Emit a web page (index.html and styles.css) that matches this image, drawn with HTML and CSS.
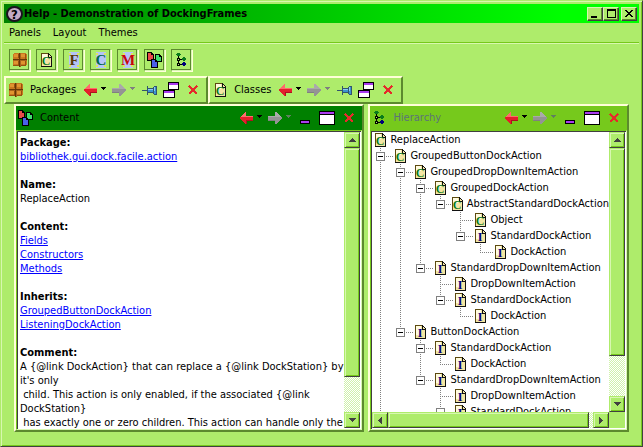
FILE: index.html
```html
<!DOCTYPE html>
<html lang="en">
<head>
<meta charset="utf-8">
<title>Help - Demonstration of DockingFrames</title>
<link rel="stylesheet" href="styles.css">
</head>
<body>
<svg class="sprite" aria-hidden="true">
  <symbol id="package" viewBox="0 0 14 14">
    <path fill="#c87820" d="M1 0h12v1h1v11h-1v1H1v-1H0V1h1z"/>
    <path fill="#e09430" d="M1 1h4v3H1zM8 1h4v3H8zM1 8h4v3H1zM8 8h4v3H8z"/>
    <path fill="#96500f" d="M0 12h6v1H0zM8 12h5v1H8zM5 1h1v4H5zM12 1h1v5h-1zM12 8h1v5h-1zM5 8h1v5H5z"/>
    <path fill="#663506" d="M6 0h1v14H6zM0 6h14v1H0z"/>
    <path fill="#a8641c" d="M7 0h1v6H7zM7 7h1v7H7zM0 7h6v1H0zM8 7h6v1H8z"/>
  </symbol>
  <symbol id="sheet" viewBox="0 0 11 14">
    <path fill="#f3e6a4" d="M0 0h7l4 4v10H0z"/>
    <path fill="#fffbe0" d="M1 1h5v5H1zM1 6h3v4H1z"/>
    <path fill="#5c4a10" d="M0 0h1v14H0zM0 0h7v1H0z"/>
    <path fill="#111" d="M0 13h11v1H0zM10 4h1v10h-1zM7 0h1v5H7zM7 4h4v1H7zM8 1h1v1H8zM9 2h1v1H9zM10 3h1v1h-1z"/>
  </symbol>
  <symbol id="class" viewBox="0 0 11 14">
    <use href="#sheet" width="11" height="14"/>
    <text x="5" y="12" text-anchor="middle" class="glyph glyph-class">C</text>
  </symbol>
  <symbol id="interface" viewBox="0 0 11 14">
    <use href="#sheet" width="11" height="14"/>
    <text x="5" y="12" text-anchor="middle" class="glyph glyph-interface">I</text>
  </symbol>
  <symbol id="member" viewBox="0 0 16 16">
    <path fill="#b4c4f8" d="M3 0h10v16H3z"/>
    <path fill="#dfe45c" d="M3 1h2v2H3zM11 1h2v2h-2zM3 13h2v2H3zM11 13h2v2h-2z"/>
  </symbol>
  <symbol id="pages" viewBox="0 0 15 16">
    <path stroke="#000" fill="#e84a4a" d="M.5.5h4l2 2v6h-6z"/>
    <path stroke="#000" fill="#3fe070" d="M8.500 2.500h4l2 2v5h-6z"/>
    <path stroke="#000" fill="#4a60e8" d="M4.500 7.500h4l2 2v6h-6z"/>
    <path stroke="#000" fill="none" d="M4.500.5v2h2M12.500 2.500v2h2M8.500 7.500v2h2"/>
  </symbol>
  <symbol id="hierarchy" viewBox="0 0 11 14">
    <path stroke="#000" fill="none" d="M2.500 3v10M3 6.500h4M3 11.500h4"/>
    <path fill="#0a7a1c" d="M1 0h3v1H1zM0 1h5v1H0zM1 2h3v1H1zM7 4h2v1H7zM6 5h4v2H6zM7 7h2v1H7z"/>
    <path fill="#00007a" d="M7 9h2v1H7zM6 10h4v2H6zM7 12h2v1H7z"/>
    <path fill="#000" d="M1 5h3v3H1zM1 10h3v3H1z"/>
    <path fill="#aeec6b" d="M2 6h1v1H2zM2 11h1v1H2z"/>
  </symbol>
  <symbol id="arrow-left" viewBox="0 0 14 12">
    <path fill="#e3202c" d="M0 6l6-6h1v4h7v5H7v3H6z"/>
    <path fill="#ff6b6b" d="M1 5l5-5h1v4h7v1H6L4 5z"/>
    <path fill="#ad1220" d="M1 7l5 5h1V8h7v1H8v3H6z"/>
  </symbol>
  <symbol id="arrow-right" viewBox="0 0 14 12">
    <path fill="#949494" d="M14 6L8 0H7v4H0v5h7v3h1z"/>
    <path fill="#aaa" d="M13 5L8 0H7v4H0v1h8z"/>
    <path fill="#808080" d="M13 7l-5 5H7V8H0v1h7v3h1z"/>
  </symbol>
  <symbol id="caret" viewBox="0 0 5 3"><path fill="currentColor" d="M0 0h5v1H4v1H3v1H2V2H1V1H0z"/></symbol>
  <symbol id="pin" viewBox="0 0 15 9">
    <path fill="#33556e" d="M0 4h5v1H0zM5 0h1v9H5zM6 2h5v5H6zM11 1h1v7h-1zM12 0h3v9h-3z"/>
    <path fill="#3c94cf" d="M6 3h5v3H6zM12 1h2v7h-2z"/>
    <path fill="#8accf4" d="M6 3h5v1H6zM12 1h1v4h-1z"/>
  </symbol>
  <symbol id="windows" viewBox="0 0 16 16">
    <path fill="#000" d="M5 0h11v8H5zM0 8h12v8H0z"/>
    <path fill="#fff" d="M6 3h9v4H6zM1 11h10v4H1z"/>
    <path fill="#aa3cf0" d="M6 1h9v2H6zM1 9h10v2H1z"/>
  </symbol>
  <symbol id="minimize" viewBox="0 0 10 14"><path fill="#000" d="M0 9h10v4H0z"/><path fill="#aa3cf0" d="M1 10h8v2H1z"/></symbol>
  <symbol id="maximize" viewBox="0 0 16 14"><path fill="#000" d="M0 0h16v14H0z"/><path fill="#fff" d="M1 4h14v9H1z"/><path fill="#aa3cf0" d="M1 1h14v2H1z"/></symbol>
  <symbol id="cross" viewBox="0 0 10 10"><path fill="none" stroke="#e52b2b" stroke-width="2" d="M1 1l8 8M9 1L1 9"/></symbol>
  <symbol id="up" viewBox="0 0 7 4"><path fill="currentColor" d="M3 0h1v1h1v1h1v1h1v1H0V3h1V2h1V1h1z"/></symbol>
  <symbol id="down" viewBox="0 0 7 4"><path fill="currentColor" d="M0 0h7v1H6v1H5v1H4v1H3V3H2V2H1V1H0z"/></symbol>
  <symbol id="left" viewBox="0 0 4 7"><path fill="currentColor" d="M4 0v7H3V6H2V5H1V4H0V3h1V2h1V1h1V0z"/></symbol>
  <symbol id="right" viewBox="0 0 4 7"><path fill="currentColor" d="M0 0v7h1V6h1V5h1V4h1V3H3V2H2V1H1V0z"/></symbol>
</svg>

<div class="window">
  <header class="titlebar">
    <svg class="app-icon" width="17" height="16" viewBox="0 0 17 16" aria-hidden="true">
      <ellipse cx="8.500" cy="8" rx="7.500" ry="7" fill="#c4abc6" stroke="#1c1220" stroke-width="2"/>
      <text x="8.500" y="13" text-anchor="middle" class="app-glyph">?</text>
    </svg>
    <h1 class="title">Help - Demonstration of DockingFrames</h1>
    <div class="window-controls">
      <button class="control" aria-label="Minimize"><svg width="10" height="9"><path d="M1 7h6v2H1z"/></svg></button>
      <button class="control" aria-label="Maximize"><svg width="9" height="9"><path fill-rule="evenodd" d="M0 0h9v9H0zM1 2v6h7V2z"/></svg></button>
      <button class="control control-close" aria-label="Close"><svg width="8" height="7"><path d="M0 0h2v1H0zM6 0h2v1H6zM1 1h2v1H1zM5 1h2v1H5zM2 2h4v1H2zM3 3h2v1H3zM2 4h4v1H2zM1 5h2v1H1zM5 5h2v1H5zM0 6h2v1H0zM6 6h2v1H6z"/></svg></button>
    </div>
  </header>

  <nav class="menubar">
    <button class="menu">Panels</button>
    <button class="menu">Layout</button>
    <button class="menu">Themes</button>
  </nav>

  <div class="toolbar">
    <button class="tool" aria-label="Packages"><svg width="14" height="14"><use href="#package"/></svg></button>
    <button class="tool" aria-label="Classes"><svg width="11" height="14"><use href="#class"/></svg></button>
    <button class="tool" aria-label="Fields"><svg width="16" height="16"><use href="#member"/><text x="8" y="13" text-anchor="middle" class="letter letter-field">F</text></svg></button>
    <button class="tool" aria-label="Constructors"><svg width="16" height="16"><use href="#member"/><text x="8" y="13" text-anchor="middle" class="letter letter-constructor">C</text></svg></button>
    <button class="tool" aria-label="Methods"><svg width="16" height="16"><use href="#member"/><text x="8" y="13" text-anchor="middle" class="letter letter-method">M</text></svg></button>
    <button class="tool" aria-label="Content"><svg width="15" height="16"><use href="#pages"/></svg></button>
    <button class="tool" aria-label="Hierarchy"><svg width="11" height="14"><use href="#hierarchy"/></svg></button>
  </div>

  <div class="dockbars">
    <section class="dockbar">
      <svg class="dock-icon" width="14" height="14"><use href="#package"/></svg>
      <h2 class="dock-title">Packages</h2>
      <div class="actions">
        <button class="act act-arrow" aria-label="Back"><svg width="14" height="12"><use href="#arrow-left"/></svg></button>
        <button class="act act-caret" aria-label="Back history"><svg width="5" height="3"><use href="#caret"/></svg></button>
        <button class="act act-arrow" aria-label="Forward"><svg width="14" height="12"><use href="#arrow-right"/></svg></button>
        <button class="act act-caret act-off" aria-label="Forward history"><svg width="5" height="3"><use href="#caret"/></svg></button>
        <button class="act" aria-label="Pin"><svg width="15" height="9"><use href="#pin"/></svg></button>
        <button class="act" aria-label="Restore"><svg width="16" height="16"><use href="#windows"/></svg></button>
        <button class="act" aria-label="Close"><svg width="10" height="10"><use href="#cross"/></svg></button>
      </div>
    </section>
    <section class="dockbar">
      <svg class="dock-icon dock-icon-narrow" width="11" height="14"><use href="#class"/></svg>
      <h2 class="dock-title">Classes</h2>
      <div class="actions">
        <button class="act act-arrow" aria-label="Back"><svg width="14" height="12"><use href="#arrow-left"/></svg></button>
        <button class="act act-caret" aria-label="Back history"><svg width="5" height="3"><use href="#caret"/></svg></button>
        <button class="act act-arrow" aria-label="Forward"><svg width="14" height="12"><use href="#arrow-right"/></svg></button>
        <button class="act act-caret act-off" aria-label="Forward history"><svg width="5" height="3"><use href="#caret"/></svg></button>
        <button class="act" aria-label="Pin"><svg width="15" height="9"><use href="#pin"/></svg></button>
        <button class="act" aria-label="Restore"><svg width="16" height="16"><use href="#windows"/></svg></button>
        <button class="act" aria-label="Close"><svg width="10" height="10"><use href="#cross"/></svg></button>
      </div>
    </section>
  </div>

  <main class="panels">
    <section class="panel panel-content">
      <header class="panel-head panel-head-active">
        <svg class="dock-icon" width="15" height="16"><use href="#pages"/></svg>
        <h2 class="dock-title">Content</h2>
        <div class="actions">
          <button class="act act-arrow" aria-label="Back"><svg width="14" height="12"><use href="#arrow-left"/></svg></button>
          <button class="act act-caret" aria-label="Back history"><svg width="5" height="3"><use href="#caret"/></svg></button>
          <button class="act act-arrow" aria-label="Forward"><svg width="14" height="12"><use href="#arrow-right"/></svg></button>
          <button class="act act-caret act-off" aria-label="Forward history"><svg width="5" height="3"><use href="#caret"/></svg></button>
          <button class="act" aria-label="Minimize"><svg width="10" height="14"><use href="#minimize"/></svg></button>
          <button class="act" aria-label="Maximize"><svg width="16" height="14"><use href="#maximize"/></svg></button>
          <button class="act" aria-label="Close"><svg width="10" height="10"><use href="#cross"/></svg></button>
        </div>
      </header>
      <div class="view">
        <article class="doc">
          <h3>Package:</h3>
          <p><a href="#package-page">bibliothek.gui.dock.facile.action</a></p>
          <h3>Name:</h3>
          <p>ReplaceAction</p>
          <h3>Content:</h3>
          <p><a href="#fields">Fields</a><br><a href="#constructors">Constructors</a><br><a href="#methods">Methods</a></p>
          <h3>Inherits:</h3>
          <p><a href="#grouped">GroupedButtonDockAction</a><br><a href="#listening">ListeningDockAction</a></p>
          <h3>Comment:</h3>
          <p class="comment">A {@link DockAction} that can replace a {@link DockStation} by
it's only
 child. This action is only enabled, if the associated {@link
DockStation}
 has exactly one or zero children. This action can handle only the</p>
        </article>
        <div class="scroll scroll-y">
          <button class="bevel step" aria-label="Scroll up"><svg width="7" height="4"><use href="#up"/></svg></button>
          <div class="bevel thumb thumb-doc"></div>
          <div class="track track-doc"></div>
          <button class="bevel step" aria-label="Scroll down"><svg width="7" height="4"><use href="#down"/></svg></button>
        </div>
      </div>
    </section>

    <section class="panel panel-hierarchy">
      <header class="panel-head">
        <svg class="dock-icon dock-icon-narrow" width="11" height="14"><use href="#hierarchy"/></svg>
        <h2 class="dock-title">Hierarchy</h2>
        <div class="actions">
          <button class="act act-arrow" aria-label="Back"><svg width="14" height="12"><use href="#arrow-left"/></svg></button>
          <button class="act act-caret" aria-label="Back history"><svg width="5" height="3"><use href="#caret"/></svg></button>
          <button class="act act-arrow" aria-label="Forward"><svg width="14" height="12"><use href="#arrow-right"/></svg></button>
          <button class="act act-caret act-off" aria-label="Forward history"><svg width="5" height="3"><use href="#caret"/></svg></button>
          <button class="act" aria-label="Minimize"><svg width="10" height="14"><use href="#minimize"/></svg></button>
          <button class="act" aria-label="Maximize"><svg width="16" height="14"><use href="#maximize"/></svg></button>
          <button class="act" aria-label="Close"><svg width="10" height="10"><use href="#cross"/></svg></button>
        </div>
      </header>
      <div class="view">
        <div class="pane">
          <div class="tree">
            <div class="node"><svg width="11" height="14"><use href="#class"/></svg>ReplaceAction</div>
            <ul>
              <li class="open-end">
                <div class="node"><span class="branch"><button class="toggle" aria-label="Collapse"></button></span><svg width="11" height="14"><use href="#class"/></svg>GroupedButtonDockAction</div>
                <ul>
                  <li>
                    <div class="node"><span class="branch"><button class="toggle" aria-label="Collapse"></button></span><svg width="11" height="14"><use href="#class"/></svg>GroupedDropDownItemAction</div>
                    <ul>
                      <li>
                        <div class="node"><span class="branch"><button class="toggle" aria-label="Collapse"></button></span><svg width="11" height="14"><use href="#class"/></svg>GroupedDockAction</div>
                        <ul>
                          <li>
                            <div class="node"><span class="branch"><button class="toggle" aria-label="Collapse"></button></span><svg width="11" height="14"><use href="#class"/></svg>AbstractStandardDockAction</div>
                            <ul>
                              <li><div class="node"><span class="branch"></span><svg width="11" height="14"><use href="#class"/></svg>Object</div></li>
                              <li>
                                <div class="node"><span class="branch"><button class="toggle" aria-label="Collapse"></button></span><svg width="11" height="14"><use href="#interface"/></svg>StandardDockAction</div>
                                <ul><li><div class="node"><span class="branch"></span><svg width="11" height="14"><use href="#interface"/></svg>DockAction</div></li></ul>
                              </li>
                            </ul>
                          </li>
                        </ul>
                      </li>
                      <li>
                        <div class="node"><span class="branch"><button class="toggle" aria-label="Collapse"></button></span><svg width="11" height="14"><use href="#interface"/></svg>StandardDropDownItemAction</div>
                        <ul>
                          <li><div class="node"><span class="branch"></span><svg width="11" height="14"><use href="#interface"/></svg>DropDownItemAction</div></li>
                          <li>
                            <div class="node"><span class="branch"><button class="toggle" aria-label="Collapse"></button></span><svg width="11" height="14"><use href="#interface"/></svg>StandardDockAction</div>
                            <ul><li><div class="node"><span class="branch"></span><svg width="11" height="14"><use href="#interface"/></svg>DockAction</div></li></ul>
                          </li>
                        </ul>
                      </li>
                    </ul>
                  </li>
                  <li>
                    <div class="node"><span class="branch"><button class="toggle" aria-label="Collapse"></button></span><svg width="11" height="14"><use href="#interface"/></svg>ButtonDockAction</div>
                    <ul>
                      <li>
                        <div class="node"><span class="branch"><button class="toggle" aria-label="Collapse"></button></span><svg width="11" height="14"><use href="#interface"/></svg>StandardDockAction</div>
                        <ul><li><div class="node"><span class="branch"></span><svg width="11" height="14"><use href="#interface"/></svg>DockAction</div></li></ul>
                      </li>
                      <li>
                        <div class="node"><span class="branch"><button class="toggle" aria-label="Collapse"></button></span><svg width="11" height="14"><use href="#interface"/></svg>StandardDropDownItemAction</div>
                        <ul>
                          <li><div class="node"><span class="branch"></span><svg width="11" height="14"><use href="#interface"/></svg>DropDownItemAction</div></li>
                          <li><div class="node"><span class="branch"><button class="toggle" aria-label="Collapse"></button></span><svg width="11" height="14"><use href="#interface"/></svg>StandardDockAction</div></li>
                        </ul>
                      </li>
                    </ul>
                  </li>
                </ul>
              </li>
            </ul>
          </div>
          <div class="scroll scroll-x">
            <button class="bevel step" aria-label="Scroll left"><svg width="4" height="7"><use href="#left"/></svg></button>
            <div class="bevel thumb thumb-wide"></div>
            <div class="track track-wide"></div>
            <button class="bevel step" aria-label="Scroll right"><svg width="4" height="7"><use href="#right"/></svg></button>
          </div>
        </div>
        <div class="scroll scroll-y scroll-corner">
          <button class="bevel step" aria-label="Scroll up"><svg width="7" height="4"><use href="#up"/></svg></button>
          <div class="bevel thumb thumb-tree"></div>
          <div class="track track-tree"></div>
          <button class="bevel step" aria-label="Scroll down"><svg width="7" height="4"><use href="#down"/></svg></button>
        </div>
      </div>
    </section>
  </main>
</div>
</body>
</html>
```

FILE: styles.css
```css
:root {
  --base: #aeec6b;
  --light: #d8f7b0;
  --cream: #ffffd8;
  --mid: #76c91c;
  --shade: #5c8a2e;
  --dark: #404040;
}

* { box-sizing: border-box; }

body {
  margin: 0;
  background: var(--base);
  color: #000;
  font: 11px/14px "DejaVu Sans Condensed", "DejaVu Sans", sans-serif;
}

h1, h2, h3, p, ul { margin: 0; padding: 0; font-size: 11px; font-weight: normal; }
ul { list-style: none; }
button { margin: 0; padding: 0; border: 0; background: none; color: inherit; font: inherit; }
svg { display: block; flex: none; shape-rendering: crispEdges; }
.sprite { display: none; }

.window {
  display: flex;
  flex-direction: column;
  height: 100vh;
  padding: 2px;
  border: 1px solid var(--base);
  border-right-color: var(--dark);
  border-bottom-color: var(--dark);
  box-shadow: inset 1px 1px var(--light), inset -1px -1px var(--mid);
}

/* Title bar */
.titlebar {
  display: flex;
  align-items: center;
  height: 19px;
  margin: 1px 1px 0;
  padding: 0 2px;
  background: linear-gradient(to right, #008000, #00ff00 88%);
}
.app-icon { shape-rendering: auto; }
.app-glyph { font: bold 13px "DejaVu Sans Condensed", sans-serif; }
.title { flex: 1; padding-left: 1px; font-weight: bold; white-space: nowrap; }
.window-controls { display: flex; }
.control {
  display: flex;
  align-items: center;
  justify-content: center;
  width: 16px;
  height: 14px;
  background: var(--base);
  border: 1px solid var(--light);
  border-right-color: var(--dark);
  border-bottom-color: var(--dark);
  box-shadow: inset -1px -1px var(--shade);
}
.control-close { margin-left: 2px; }

/* Menu and toolbar */
.menubar {
  display: flex;
  gap: 12px;
  height: 20px;
  margin: 0 1px;
  padding: 0 5px;
  border-bottom: 1px solid var(--mid);
  box-shadow: 0 1px var(--light);
}
.toolbar {
  display: flex;
  gap: 6px;
  margin: 6px 6px 5px;
}
.tool {
  display: flex;
  align-items: center;
  justify-content: center;
  width: 21px;
  height: 22px;
  border: 1px solid var(--shade);
  border-right-color: var(--light);
  border-bottom-color: var(--light);
  box-shadow: inset -1px -1px var(--shade), 1px 1px var(--cream);
}
.glyph, .letter { font-family: "Liberation Serif", serif; font-weight: bold; }
.glyph { font-size: 12px; }
.glyph-class { fill: #087a1c; }
.glyph-interface { fill: #000080; }
.letter { font-size: 15px; }
.letter-field { fill: #5a3a08; }
.letter-constructor { fill: #056a48; }
.letter-method { fill: #c8060c; }

/* Docked bars */
.dockbars { display: flex; padding-left: 1px; }
.dockbar {
  display: flex;
  align-items: center;
  height: 28px;
  padding: 0 2px 0 3px;
  border: 2px solid var(--cream);
  border-right-color: var(--shade);
  border-bottom-color: var(--shade);
}
.dock-icon { margin-right: 7px; }
.dock-icon-narrow { margin: 0 8px 0 2px; }
.dock-title { white-space: nowrap; }
.dockbar .actions { padding-left: 4px; }
.actions { display: flex; height: 24px; }
.act {
  display: flex;
  align-items: center;
  justify-content: center;
  width: 22px;
}
.act-arrow { width: 20px; }
.act-caret { width: 9px; padding: 0 3px 4px 1px; }
.act-off { color: #808080; }

/* Panels */
.panels {
  display: flex;
  gap: 4px;
  flex: 1;
  min-height: 0;
  padding: 0 11px 12px;
}
.panel {
  display: flex;
  flex-direction: column;
  min-width: 0;
  border: 2px solid var(--cream);
  border-right-color: var(--shade);
  border-bottom-color: var(--shade);
}
.panel-content { flex: 351; }
.panel-hierarchy { flex: 260; }
.panel-head {
  display: flex;
  align-items: center;
  height: 24px;
  padding: 0 2px;
  background: var(--mid);
  color: #5c7478;
}
.panel-head-active { background: #008000; color: #000; }
.panel-head .dock-title { flex: 1; }
.panel-head .act { color: #000; }
.panel-head .act-off { color: #5f805f; }
.view {
  display: flex;
  flex: 1;
  min-height: 0;
  background: #fff;
  border: 1px solid var(--mid);
  border-right-color: var(--light);
  border-bottom-color: var(--light);
  box-shadow: inset 1px 1px var(--dark);
  padding: 1px;
}

.doc {
  flex: 1;
  min-width: 0;
  overflow: hidden;
  padding: 4px 0 0 2px;
  white-space: nowrap;
}
.doc h3 { font-weight: bold; }
.doc p { margin-bottom: 14px; }
.doc .comment { margin: 0; white-space: pre; }
.doc a { color: #0000ff; }

/* Hierarchy tree */
.pane { display: flex; flex-direction: column; flex: 1; min-width: 0; }
.tree { flex: 1; min-height: 0; overflow: hidden; padding-left: 3px; }
.node { display: flex; align-items: center; height: 16px; white-space: nowrap; }
.node svg { margin-right: 4px; }
.tree li {
  background: repeating-linear-gradient(#808080 0 1px, transparent 1px 2px) 5px 0 / 1px 100% no-repeat;
}
.tree li:last-child { background-size: 1px 8px; }
.tree li.open-end { background-size: 1px 100%; }
.tree li > ul { padding-left: 20px; }
.branch {
  display: flex;
  align-items: center;
  width: 20px;
  height: 16px;
  padding-left: 1px;
  background: repeating-linear-gradient(to right, #808080 0 1px, transparent 1px 2px) 5px 8px / 13px 1px no-repeat;
}
.toggle {
  flex: none;
  width: 9px;
  height: 9px;
  border: 1px solid #808080;
  background: linear-gradient(#000, #000) 1px 3px / 5px 1px no-repeat #fff;
}

/* Scroll bars */
.scroll { display: flex; flex: none; color: var(--dark); }
.scroll-y { flex-direction: column; width: 16px; }
.scroll-x { height: 16px; }
.scroll-corner { padding-bottom: 16px; background: var(--base); }
.bevel {
  background: var(--base);
  border: 1px solid var(--base);
  border-right-color: var(--dark);
  border-bottom-color: var(--dark);
  box-shadow: inset 1px 1px var(--light), inset -1px -1px var(--mid);
}
.step {
  display: flex;
  flex: none;
  align-items: center;
  justify-content: center;
  width: 16px;
  height: 16px;
}
.track { background: repeating-conic-gradient(#fff 0 25%, #d0f2ac 0 50%) 0 0 / 2px 2px; }
.thumb-doc { flex: 230; }
.track-doc { flex: 35; }
.thumb-tree { flex: 208; }
.track-tree { flex: 41; }
.thumb-wide { flex: 201; }
.track-wide { flex: 4; }
```
